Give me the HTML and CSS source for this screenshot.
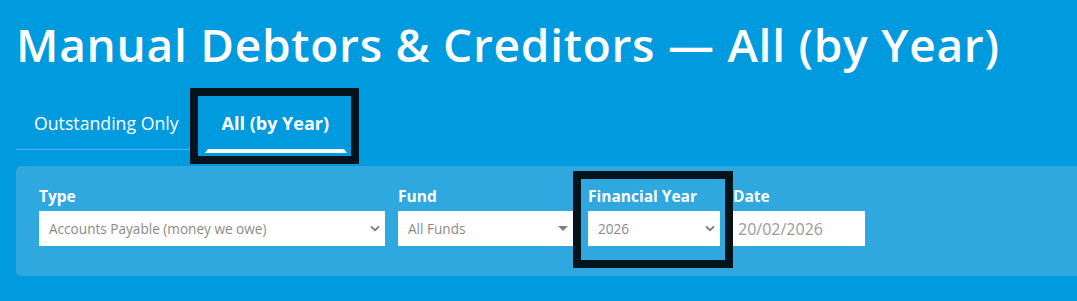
FILE: index.html
```html
<!DOCTYPE html>
<html>
<head>
<meta charset="utf-8">
<link rel="stylesheet" href="styles.css">
</head>
<body>
<div class="page">
  <h1 class="title">Manual Debtors &amp; Creditors — All (by Year)</h1>
  <div class="tabs">
    <div class="tab">Outstanding Only</div>
    <div class="tab active">All (by Year)</div>
  </div>
  <div class="panel">
    <div class="field f-type">
      <div class="label">Type</div>
      <div class="select"><span>Accounts Payable (money we owe)</span>
        <svg class="chev" width="10" height="7" viewBox="0 0 10 7"><path d="M1 1.4 L5 5.2 L9 1.4" fill="none" stroke="#7a7a7a" stroke-width="1.8"/></svg>
      </div>
    </div>
    <div class="field f-fund">
      <div class="label">Fund</div>
      <div class="select"><span>All Funds</span>
        <svg class="caret" width="10" height="5" viewBox="0 0 10 5"><path d="M0 0 H10 L5 5 Z" fill="#808080"/></svg>
      </div>
    </div>
    <div class="field f-fy">
      <div class="label">Financial Year</div>
      <div class="select"><span>2026</span>
        <svg class="chev" width="10" height="7" viewBox="0 0 10 7"><path d="M1 1.4 L5 5.2 L9 1.4" fill="none" stroke="#7a7a7a" stroke-width="1.8"/></svg>
      </div>
    </div>
    <div class="field f-date">
      <div class="label">Date</div>
      <div class="input">20/02/2026</div>
    </div>
  </div>
  <div class="hl hl-tab"></div>
  <div class="hl hl-fy"></div>
</div>
</body>
</html>
```
FILE: styles.css
```css
html, body {
  margin: 0;
  padding: 0;
  background: #009ade;
}
body {
  font-family: "Open Sans", "DejaVu Sans", sans-serif;
  color: #fff;
  width: 1077px;
  height: 301px;
  overflow: hidden;
}
.page {
  position: relative;
  padding: 18px 0 0 16px;
}
.title {
  margin: 0;
  font-size: 46px;
  font-weight: 600;
  line-height: 52px;
  letter-spacing: 0.75px;
}
.tabs {
  display: flex;
  margin-top: 32px;
  width: 174px;
  border-bottom: 1px solid #4db6e6;
}
.tab {
  flex: none;
  font-size: 17.7px;
  line-height: 25px;
  padding: 9px 15px 13px 15px;
  border-left: 3px solid transparent;
  border-right: 3px solid transparent;
  border-bottom: 4px solid transparent;
  margin-bottom: -4px;
  white-space: nowrap;
}
.tab.active {
  font-weight: 700;
  font-size: 18px;
  border-bottom-color: #fff;
  margin-left: 8px;
  box-sizing: border-box;
  width: 142px;
  padding: 9px 0 13px 14px;
}
.panel {
  margin-top: 16px;
  background: #2ea8df;
  border-radius: 5px 0 0 5px;
  padding: 20px 0 30px 23px;
  display: flex;
  gap: 13px;
}
.field {
  flex: none;
  display: flex;
  flex-direction: column;
}
.f-type { width: 346px; }
.f-fund { width: 177px; }
.f-fy { width: 132px; }
.f-date { width: 132px; }
.label {
  font-size: 15.5px;
  font-weight: 700;
  line-height: 20px;
  margin-bottom: 5px;
}
.select, .input {
  height: 35px;
  background: #fff;
  color: #8a8a8a;
  display: flex;
  align-items: center;
  box-sizing: border-box;
}
.select {
  font-size: 13.6px;
  justify-content: space-between;
  padding: 0 5px 0 10px;
}
.select .caret { margin-right: 2px; }
.input {
  font-size: 16px;
  padding: 0 5px;
  color: #9a9a9a;
}
.hl {
  position: absolute;
  border: 8px solid #04141d;
  box-sizing: border-box;
}
.hl-tab {
  left: 190px;
  top: 88px;
  width: 169px;
  height: 76px;
}
.hl-fy {
  left: 573px;
  top: 171px;
  width: 160px;
  height: 97px;
}
```
